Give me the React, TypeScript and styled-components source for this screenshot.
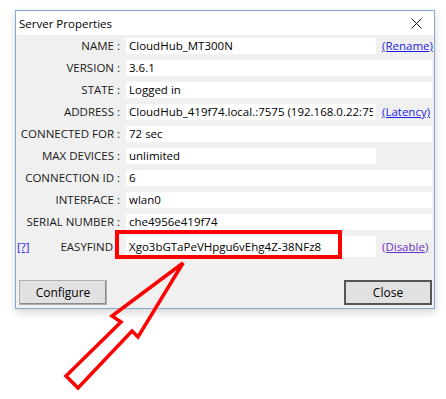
import React from 'react';
import styled, { createGlobalStyle } from 'styled-components';

const GlobalStyle = createGlobalStyle`
  html, body {
    margin: 0;
    padding: 0;
    background: #ffffff;
  }
  body {
    font-family: "Open Sans", "Noto Sans", "Liberation Sans", sans-serif;
    font-size: 11.5px;
    color: #000;
  }
`;

const Page = styled.div`
  position: relative;
  width: 446px;
  height: 399px;
  padding: 10px 0 0 15px;
  box-sizing: border-box;
  background: #fff;
`;

const Window = styled.div`
  width: 420px;
  height: 299px;
  box-sizing: border-box;
  border: 1px solid #86a9d2;
  background: #f0f0f0;
  box-shadow: 0 3px 8px rgba(0, 0, 0, 0.18);
  display: flex;
  flex-direction: column;
`;

const TitleBar = styled.div`
  height: 24px;
  background: #fff;
  display: flex;
  align-items: center;
  justify-content: space-between;
  padding: 0 12px 0 3px;
  font-size: 11.5px;
`;

const Body = styled.div`
  display: grid;
  grid-template-columns: 104px 250px 50px;
  column-gap: 6px;
  row-gap: 6px;
  padding: 3px 2px 0 0;
  align-items: center;
`;

const Label = styled.div`
  text-align: right;
  white-space: nowrap;
  line-height: 16px;
  color: #1a1a1a;
`;

const HelpLabel = styled.div`
  display: flex;
  justify-content: space-between;
  align-items: center;
  padding: 0 7px 0 1px;
  color: #1a1a1a;
`;

const Field = styled.div<{ $wide?: boolean; $tall?: boolean }>`
  position: relative;
  grid-column: ${(p) => (p.$wide ? 'span 2' : 'span 1')};
  min-width: 0;
  height: ${(p) => (p.$tall ? '21px' : '16px')};
  line-height: ${(p) => (p.$tall ? '21px' : '16px')};
  background: #fff;
  padding: 0 3px;
  white-space: nowrap;
`;

const Clip = styled.div`
  overflow: hidden;
  white-space: nowrap;
`;

const Link = styled.a<{ $visited?: boolean }>`
  color: ${(p) => (p.$visited ? '#6a2fc4' : '#1e1ee8')};
  text-decoration: underline;
  white-space: nowrap;
  line-height: 16px;
  cursor: pointer;
`;

const Highlight = styled.div`
  position: absolute;
  left: -11px;
  top: -6px;
  width: 227px;
  height: 29px;
  box-sizing: border-box;
  border: 4px solid #ff0000;
  pointer-events: none;
`;

const Footer = styled.div`
  margin-top: auto;
  display: flex;
  justify-content: space-between;
  padding: 0 2px 3px 3px;
`;

const Button = styled.button<{ $default?: boolean }>`
  width: 88px;
  height: 25px;
  box-sizing: border-box;
  font-family: inherit;
  font-size: 12px;
  color: #000;
  background: #e1e1e1;
  border: ${(p) => (p.$default ? '2px solid #555' : '1px solid #adadad')};
  box-shadow: ${(p) => (p.$default ? 'none' : 'inset -1px -1px 0 #8a8a8a')};
  padding: 0;
`;

const Overlay = styled.svg`
  position: absolute;
  left: 0;
  top: 0;
  pointer-events: none;
`;

type Row = {
  label: string;
  value: string;
  wide?: boolean;
  link?: string;
};

const rows: Row[] = [
  { label: 'NAME :', value: 'CloudHub_MT300N', link: '(Rename)' },
  { label: 'VERSION :', value: '3.6.1', wide: true },
  { label: 'STATE :', value: 'Logged in', wide: true },
  { label: 'ADDRESS :', value: 'CloudHub_419f74.local.:7575 (192.168.0.22:7575)', link: '(Latency)' },
  { label: 'CONNECTED FOR :', value: '72 sec', wide: true },
  { label: 'MAX DEVICES :', value: 'unlimited' },
  { label: 'CONNECTION ID :', value: '6', wide: true },
  { label: 'INTERFACE :', value: 'wlan0', wide: true },
  { label: 'SERIAL NUMBER :', value: 'che4956e419f74', wide: true },
];

export default function App() {
  return (
    <Page>
      <GlobalStyle />
      <Window>
        <TitleBar>
          <span>Server Properties</span>
          <svg width="11" height="11" viewBox="0 0 11 11">
            <path d="M0.5 0.5 L10.5 10.5 M10.5 0.5 L0.5 10.5" stroke="#111" strokeWidth="1" />
          </svg>
        </TitleBar>
        <Body>
          {rows.map((r) => (
            <React.Fragment key={r.label}>
              <Label>{r.label}</Label>
              <Field $wide={r.wide}>
                <Clip>{r.value}</Clip>
              </Field>
              {!r.wide && (r.link ? <Link>{r.link}</Link> : <span />)}
            </React.Fragment>
          ))}
          <HelpLabel>
            <Link>[?]</Link>
            <span>EASYFIND</span>
          </HelpLabel>
          <Field $tall>
            Xgo3bGTaPeVHpgu6vEhg4Z-38NFz8
            <Highlight />
          </Field>
          <Link $visited>(Disable)</Link>
        </Body>
        <Footer>
          <Button>Configure</Button>
          <Button $default>Close</Button>
        </Footer>
      </Window>
      <Overlay width="446" height="399" viewBox="0 0 446 399">
        <polygon
          points="183,263 138,337 132,331 78,388 66,376 121,322 112,316"
          fill="none"
          stroke="#ff0000"
          strokeWidth="3.5"
          strokeLinejoin="miter"
        />
      </Overlay>
    </Page>
  );
}
